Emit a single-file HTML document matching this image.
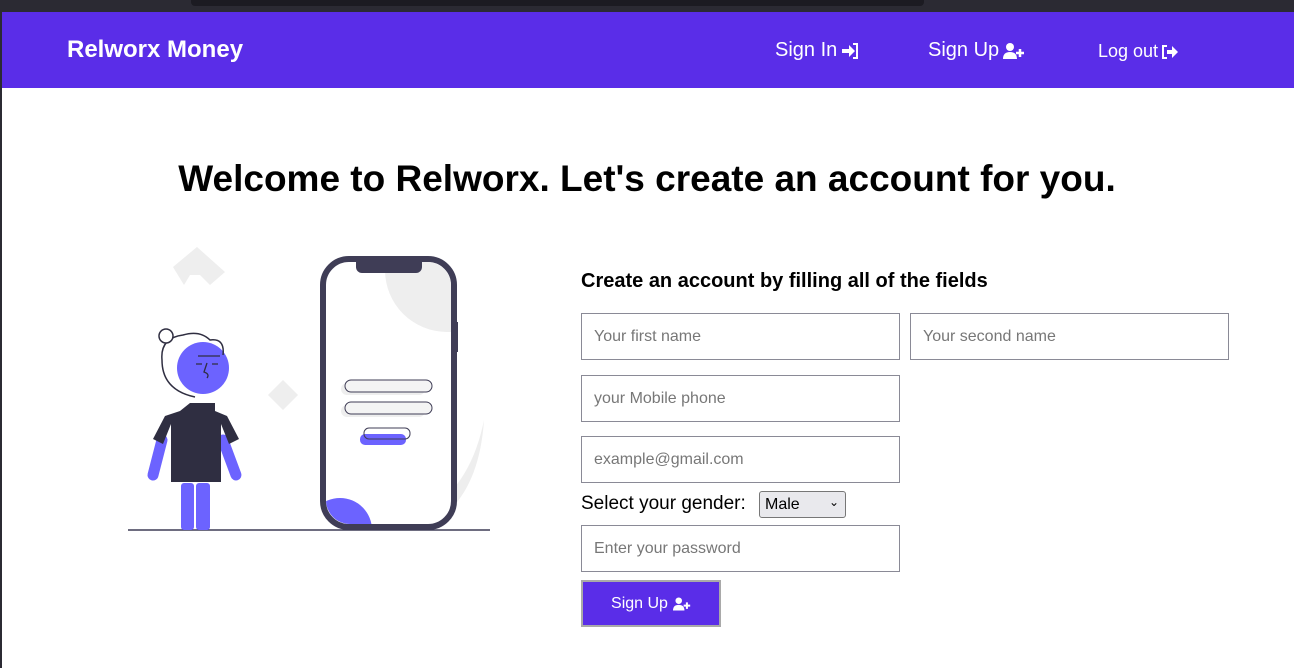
<!DOCTYPE html>
<html><head><meta charset="utf-8"><style>
*{box-sizing:border-box;margin:0;padding:0}
body{width:1294px;height:668px;background:#fff;font-family:"Liberation Sans",sans-serif;position:relative;overflow:hidden}
.lb{position:absolute;left:0;top:0;width:2px;height:668px;background:#2b2a33}
.top{position:absolute;left:0;top:0;width:1294px;height:12px;background:#2b2a33}
.top i{position:absolute;left:191px;top:0;width:733px;height:6px;background:#1c1b22;border-radius:0 0 4px 4px}
.nav{position:absolute;left:2px;top:12px;width:1292px;height:76px;background:#5a2de8;color:#fff}
.nav .brand{position:absolute;left:65px;top:24px;font-size:24px;font-weight:bold}
.nav a{position:absolute;top:27px;font-size:20px;color:#fff;text-decoration:none;display:flex;align-items:center;gap:4px}
h1{position:absolute;left:0;width:1294px;top:158px;text-align:center;font-size:37px;font-weight:bold;color:#000;white-space:nowrap}
h2{position:absolute;left:581px;top:270px;font-size:20px;font-weight:bold}
.in{position:absolute;width:319px;height:47px;border:1px solid #8a8a96;font-size:16px;color:#777;padding:14px 12px;background:#fff}
.g{position:absolute;left:581px;top:493px;font-size:19px}
.sel{position:absolute;left:759px;top:491px;width:87px;height:27px;border:1px solid #777;border-radius:3px;background:#e9e9ed;font-size:16px;padding:4px 5px}
.btn{position:absolute;left:581px;top:580px;width:140px;height:47px;background:#5a2de8;border:2px solid #a9a9a9;color:#fff;font-size:16px;display:flex;align-items:center;justify-content:center;gap:5px}
</style></head><body>
<div class="lb"></div>
<div class="top"><i></i></div>
<div class="nav"><div class="brand">Relworx Money</div>
<a style="left:773px">Sign In <svg width="18" height="16" viewBox="0 0 18 16"><path d="M1,6 h7 v-4 l6,6 -6,6 v-4 h-7z" fill="#fff"/><path d="M12,1 h4 v14 h-4" fill="none" stroke="#fff" stroke-width="2"/></svg></a>
<a style="left:926px">Sign Up <svg width="22" height="16" viewBox="0 0 22 16"><circle cx="7" cy="4" r="4" fill="#fff"/><path d="M0,16 q0,-7 7,-7 q7,0 7,7z" fill="#fff"/><path d="M17,6 v8 M13,10 h8" stroke="#fff" stroke-width="2.5"/></svg></a>
<a style="left:1096px;font-size:18px;top:29px">Log out <svg width="16" height="14" viewBox="0 0 16 14"><path d="M5,1 h-4 v12 h4" fill="none" stroke="#fff" stroke-width="2"/><path d="M5,5 h5 v-4 l6,6 -6,6 v-4 h-5z" fill="#fff"/></svg></a></div>
<h1>Welcome to Relworx. Let's create an account for you.</h1>
<svg style="position:absolute;left:120px;top:240px" width="380" height="300" viewBox="0 0 380 300">
<polygon points="53,27 77,7 105,32 90,45 80,35 70,35 64,45" fill="#eee"/>
<polygon points="148,155 163,140 178,155 163,170" fill="#eee"/>
<path d="M364,180 Q350,250 300,275 L330,270 Q360,240 364,180Z" fill="#eee"/>
<rect x="203" y="19" width="131" height="268" rx="26" fill="#fff" stroke="#3f3d56" stroke-width="6"/>
<rect x="334" y="82" width="4" height="30" fill="#3f3d56"/>
<clipPath id="c"><rect x="206" y="22" width="125" height="262" rx="24"/></clipPath>
<circle cx="220" cy="290" r="32" fill="#6c63ff" clip-path="url(#c)"/>
<circle cx="327" cy="30" r="62" fill="#eee" clip-path="url(#c)"/>
<path d="M236,19 h66 v8 a6,6 0 0 1 -6,6 h-54 a6,6 0 0 1 -6,-6z" fill="#3f3d56"/>
<rect x="221" y="143" width="84" height="12" rx="6" fill="#eee"/><rect x="225" y="140" width="87" height="12" rx="6" fill="#f4f4f4" stroke="#3f3d56"/>
<rect x="221" y="165" width="84" height="12" rx="6" fill="#eee"/><rect x="225" y="162" width="87" height="12" rx="6" fill="#f4f4f4" stroke="#3f3d56"/>
<rect x="240" y="194" width="46" height="11" rx="5" fill="#6c63ff"/><rect x="244" y="188" width="46" height="11" rx="5" fill="none" stroke="#3f3d56"/>
<line x1="8" y1="290" x2="370" y2="290" stroke="#3f3d56" stroke-width="1.5"/>
<circle cx="83" cy="128" r="26" fill="#6c63ff"/>
<path d="M75,157 Q42,150 42,120 Q40,98 63,95 Q80,90 90,100 Q105,98 103,115" fill="none" stroke="#2f2e41" stroke-width="1.5"/>
<circle cx="46" cy="96" r="7" fill="#fff" stroke="#2f2e41" stroke-width="1.5"/>
<path d="M78,116 h22 M76,124 h6 M92,124 h6 M87,123 l-3,9 q6,2 3,6" fill="none" stroke="#2f2e41" stroke-width="1.3"/>
<rect x="61" y="243" width="13" height="47" rx="3" fill="#6c63ff"/><rect x="76" y="243" width="14" height="47" rx="3" fill="#6c63ff"/>
<path d="M42,200 L33,235" stroke="#6c63ff" stroke-width="11" stroke-linecap="round"/>
<path d="M103,200 L116,235" stroke="#6c63ff" stroke-width="11" stroke-linecap="round"/>
<path d="M70,163 h25 v8 l12,5 l12,23 l-10,5 l-8,-20 v58 h-50 v-58 l-8,20 l-10,-5 l12,-23 l15,-5z" fill="#2f2e41"/>
</svg>
<h2>Create an account by filling all of the fields</h2>
<div class="in" style="left:581px;top:313px">Your first name</div>
<div class="in" style="left:910px;top:313px">Your second name</div>
<div class="in" style="left:581px;top:375px">your Mobile phone</div>
<div class="in" style="left:581px;top:436px">example@gmail.com</div>
<div class="g">Select your gender:</div>
<div class="sel">Male<span style="position:absolute;right:6px;top:3px;font-size:12px">⌄</span></div>
<div class="in" style="left:581px;top:525px">Enter your password</div>
<div class="btn">Sign Up <svg width="18" height="14" viewBox="0 0 22 16"><circle cx="7" cy="4" r="4" fill="#fff"/><path d="M0,16 q0,-7 7,-7 q7,0 7,7z" fill="#fff"/><path d="M17,6 v8 M13,10 h8" stroke="#fff" stroke-width="2.5"/></svg></div>
</body></html>
